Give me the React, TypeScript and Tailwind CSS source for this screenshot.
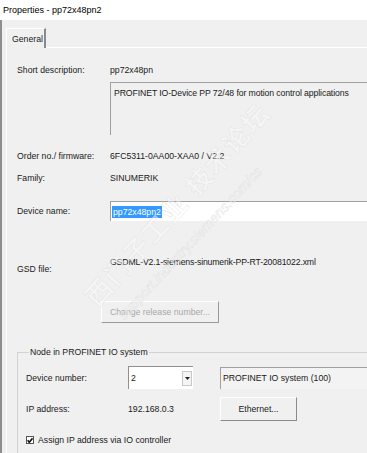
const font = { fontFamily: '"Liberation Sans", Arial, "Noto Sans CJK SC", sans-serif' };

const Row = ({ label, children, h = 16 }: { label: string; children?: React.ReactNode; h?: number }) => (
  <div className="flex items-center" style={{ height: h }}>
    <div className="w-[93px] shrink-0">{label}</div>
    {children}
  </div>
);

export default function App() {
  return (
    <div
      className="relative w-[367px] h-[453px] overflow-hidden bg-[#f0f0f0] text-[8.7px] leading-[14px] text-[#1a1a1a]"
      style={font}
    >
      {/* title bar */}
      <div className="h-[20px] bg-white flex items-center pl-[3px] text-[9px] text-black">
        Properties - pp72x48pn2
      </div>

      <div className="flex">
        <div className="w-[2px] bg-[#8f8f8f] shrink-0" />
        <div className="flex-1 pl-[4px]">
          {/* tabs */}
          <div className="h-[27px] flex items-end">
            <div className="h-[20px] w-[40px] border-l border-t border-white border-r-2 border-r-[#8a8a8a] bg-[#f0f0f0] flex items-center pl-[5px] -mb-px relative z-10">
              General
            </div>
          </div>

          {/* panel */}
          <div className="border-t border-l border-white pl-[10px] h-[406px]">
            <div className="pt-[14px]">
              <Row label="Short description:">
                <span>pp72x48pn</span>
              </Row>
            </div>
            <div className="mt-[4px] ml-[93px] h-[53px] border-t border-l border-[#a0a0a0] bg-[#f0f0f0] px-[3px] pt-[3px] -mr-2 tracking-[-0.1px]">
              PROFINET IO-Device PP 72/48 for motion control applications
            </div>

            <div className="mt-[13px]">
              <Row label="Order no./ firmware:">
                <span>6FC5311-0AA00-XAA0 / V2.2</span>
              </Row>
            </div>
            <div className="mt-[6px]">
              <Row label="Family:">
                <span>SINUMERIK</span>
              </Row>
            </div>

            <div className="mt-[15px]">
              <Row label="Device name:" h={20}>
                <div className="flex-1 h-[20px] -mr-2 bg-white border-t border-l border-[#a0a0a0] flex items-center pl-[1px]">
                  <span className="bg-[#3399ff] text-white px-[1px] leading-[12px]">pp72x48pn2</span>
                </div>
              </Row>
            </div>

            <div className="mt-[34px] flex h-[21px]">
              <div className="w-[93px] shrink-0 self-end">GSD file:</div>
              <div className="self-start tracking-[-0.15px]">GSDML-V2.1-siemens-sinumerik-PP-RT-20081022.xml</div>
            </div>

            <div className="mt-[25px] ml-[84px]">
              <button className="w-[118px] h-[22px] border-t border-l border-white border-r border-b border-r-[#9a9a9a] border-b-[#9a9a9a] text-[#a8a8a8] flex items-center justify-center">
                Change release number...
              </button>
            </div>

            {/* group box */}
            <fieldset className="mt-[22px] -mr-4 border border-[#d3d3d3] pl-[8px] pt-[7px] h-[120px]">
              <legend className="ml-[3px] px-[1px]">Node in PROFINET IO system</legend>
              <div className="flex items-center h-[23px]">
                <div className="w-[102px] shrink-0">Device number:</div>
                <div className="w-[65px] h-[23px] bg-white border-t border-l border-[#8f8f8f] flex items-center pl-[2px]">
                  <span className="flex-1">2</span>
                  <div className="w-[10px] h-[15px] mr-[1px] border border-[#c8c8c8] bg-[#f4f4f4] flex items-center justify-center">
                    <svg width="5" height="3" viewBox="0 0 5 3">
                      <path d="M0 0h5L2.5 3z" fill="#222" />
                    </svg>
                  </div>
                </div>
                <div className="ml-[27px] flex-1 h-[22px] border-t border-l border-[#a0a0a0] bg-[#f3f3f3] flex items-center pl-[2px]">
                  PROFINET IO system (100)
                </div>
              </div>

              <div className="flex items-center h-[24px] mt-[8px]">
                <div className="w-[102px] shrink-0">IP address:</div>
                <div className="w-[92px] shrink-0">192.168.0.3</div>
                <button className="w-[77px] h-[24px] border-t border-l border-white border-r border-b border-r-[#8a8a8a] border-b-[#8a8a8a] flex items-center justify-center">
                  Ethernet...
                </button>
              </div>

              <div className="flex items-center h-[14px] mt-[12px]">
                <div className="w-[8px] h-[8px] border border-[#555] bg-white flex items-center justify-center">
                  <svg width="7" height="7" viewBox="0 0 6 6">
                    <path d="M0.6 2.8 L2.3 4.8 L5.5 0.8" stroke="#111" strokeWidth="1.6" fill="none" />
                  </svg>
                </div>
                <span className="ml-[4px]">Assign IP address via IO controller</span>
              </div>
            </fieldset>
          </div>
        </div>
      </div>

      {/* watermark */}
      <div
        className="pointer-events-none absolute left-[178px] top-[205px] -translate-x-1/2 -translate-y-1/2 -rotate-[48deg] text-[26px] font-bold text-white/40 tracking-[2px] whitespace-nowrap"
        style={{ WebkitTextStroke: "0.4px #e2e2e2" }}
      >
        西门子工业 技术论坛
      </div>
      <div
        className="pointer-events-none absolute left-[190px] top-[243px] -translate-x-1/2 -translate-y-1/2 -rotate-[47deg] text-[14px] italic text-white/40 whitespace-nowrap"
        style={{ WebkitTextStroke: "0.4px #dedede" }}
      >
        support.industry.siemens.com/cs
      </div>
    </div>
  );
}
